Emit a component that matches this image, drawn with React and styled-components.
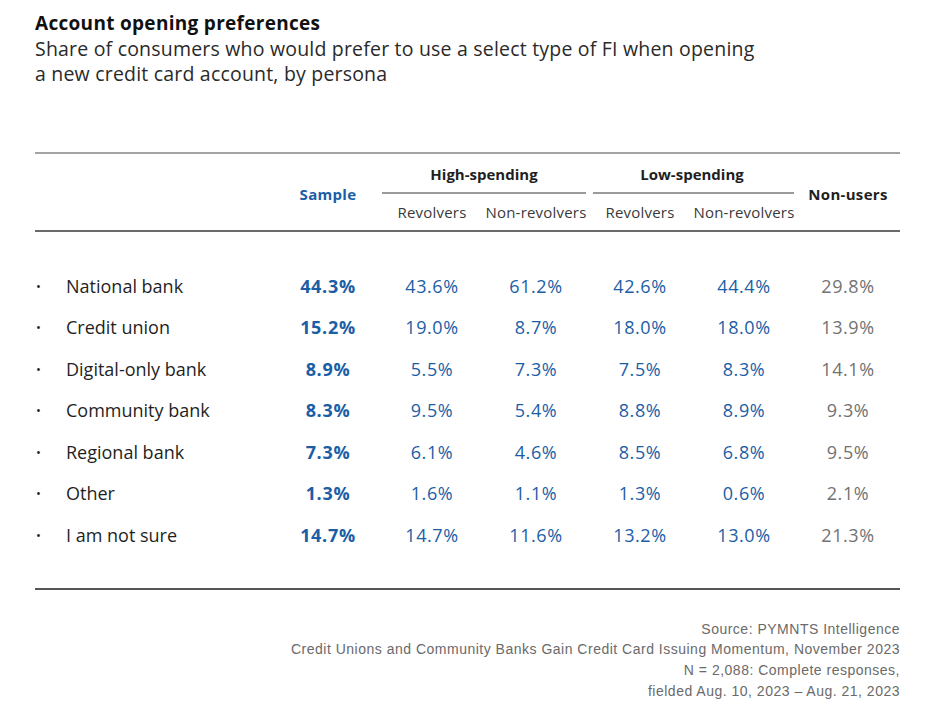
import React from 'react';
import styled, { createGlobalStyle } from 'styled-components';

const GlobalStyle = createGlobalStyle`
  html, body {
    margin: 0;
    padding: 0;
    background: #ffffff;
  }
  body {
    font-family: "Open Sans", "Liberation Sans", sans-serif;
    color: #1f1f1f;
  }
`;

const BLUE = '#1b5ea6';
const COLUMNS = '241px repeat(6, 104px)';

const Page = styled.div`
  width: 936px;
  height: 720px;
  box-sizing: border-box;
  padding: 10px 36px 0 35px;
`;

const Title = styled.h1`
  margin: 0;
  font-size: 19px;
  line-height: 26px;
  font-weight: 700;
  letter-spacing: 0.3px;
  color: #111;
`;

const Subtitle = styled.p`
  margin: 0;
  font-size: 19.5px;
  line-height: 25px;
  font-weight: 400;
  letter-spacing: 0.2px;
  color: #2a2a2a;
  width: 760px;
`;

const Table = styled.div`
  margin-top: 66px;
  border-top: 2px solid #a3a3a3;
`;

const Head = styled.div`
  display: grid;
  grid-template-columns: ${COLUMNS};
  border-bottom: 2px solid #6a6a6a;
`;

const HeadGroup = styled.div`
  grid-column: ${(p) => p.$col} / span 2;
  grid-row: 1;
  display: flex;
  flex-direction: column;
  align-items: center;
  font-size: 15px;
  font-weight: 700;
  color: #1f1f1f;
  padding-top: 10px;
  line-height: 20px;
  &::after {
    content: '';
    align-self: stretch;
    margin: 8px 2px 0 ${(p) => (p.$col === 3 ? 2 : 5)}px;
    border-bottom: 2px solid #9a9a9a;
  }
`;

const SubHead = styled.div`
  grid-row: 2;
  grid-column: ${(p) => p.$col};
  text-align: center;
  font-size: 15px;
  letter-spacing: 0.2px;
  line-height: 20px;
  color: #3a3a3a;
  padding: 8px 0 8px;
`;

const SideHead = styled.div`
  grid-row: 1 / span 2;
  grid-column: ${(p) => p.$col};
  display: flex;
  align-items: center;
  justify-content: center;
  font-size: 15px;
  font-weight: 700;
  letter-spacing: 0.3px;
  color: ${(p) => (p.$blue ? BLUE : '#1f1f1f')};
  padding-top: 4px;
`;

const Body = styled.div`
  padding: 33px 0 32px;
  border-bottom: 2px solid #555;
`;

const Row = styled.div`
  display: grid;
  grid-template-columns: ${COLUMNS};
  height: 41.5px;
  align-items: center;
`;

const Label = styled.div`
  display: flex;
  align-items: center;
  font-size: 18px;
  color: #1f1f1f;
  &::before {
    content: '•';
    width: 30px;
    padding-left: 1px;
    font-size: 13px;
  }
`;

const Cell = styled.div`
  text-align: center;
  font-size: 18px;
  letter-spacing: ${(p) => (p.$bold ? 0.7 : 0.6)}px;
  font-weight: ${(p) => (p.$bold ? 700 : 500)};
  color: ${(p) => (p.$gray ? '#727272' : BLUE)};
`;

const Footer = styled.div`
  margin-top: 29px;
  text-align: right;
  font-family: "Liberation Sans", sans-serif;
  font-size: 14px;
  letter-spacing: 0.5px;
  line-height: 20.7px;
  color: #6a6a6a;
`;

const rows = [
  ['National bank', '44.3%', '43.6%', '61.2%', '42.6%', '44.4%', '29.8%'],
  ['Credit union', '15.2%', '19.0%', '8.7%', '18.0%', '18.0%', '13.9%'],
  ['Digital-only bank', '8.9%', '5.5%', '7.3%', '7.5%', '8.3%', '14.1%'],
  ['Community bank', '8.3%', '9.5%', '5.4%', '8.8%', '8.9%', '9.3%'],
  ['Regional bank', '7.3%', '6.1%', '4.6%', '8.5%', '6.8%', '9.5%'],
  ['Other', '1.3%', '1.6%', '1.1%', '1.3%', '0.6%', '2.1%'],
  ['I am not sure', '14.7%', '14.7%', '11.6%', '13.2%', '13.0%', '21.3%'],
];

export default function App() {
  return (
    <Page>
      <GlobalStyle />
      <Title>Account opening preferences</Title>
      <Subtitle>
        Share of consumers who would prefer to use a select type of FI when opening
        <br />
        a new credit card account, by persona
      </Subtitle>
      <Table>
        <Head>
          <SideHead $col={2} $blue>Sample</SideHead>
          <HeadGroup $col={3}>High-spending</HeadGroup>
          <HeadGroup $col={5}>Low-spending</HeadGroup>
          <SideHead $col={7}>Non-users</SideHead>
          <SubHead $col={3}>Revolvers</SubHead>
          <SubHead $col={4}>Non-revolvers</SubHead>
          <SubHead $col={5}>Revolvers</SubHead>
          <SubHead $col={6}>Non-revolvers</SubHead>
        </Head>
        <Body>
          {rows.map(([label, ...vals]) => (
            <Row key={label}>
              <Label>{label}</Label>
              {vals.map((v, i) => (
                <Cell key={i} $bold={i === 0} $gray={i === 5}>
                  {v}
                </Cell>
              ))}
            </Row>
          ))}
        </Body>
      </Table>
      <Footer>
        Source: PYMNTS Intelligence
        <br />
        Credit Unions and Community Banks Gain Credit Card Issuing Momentum, November 2023
        <br />
        N = 2,088: Complete responses,
        <br />
        fielded Aug. 10, 2023 – Aug. 21, 2023
      </Footer>
    </Page>
  );
}
